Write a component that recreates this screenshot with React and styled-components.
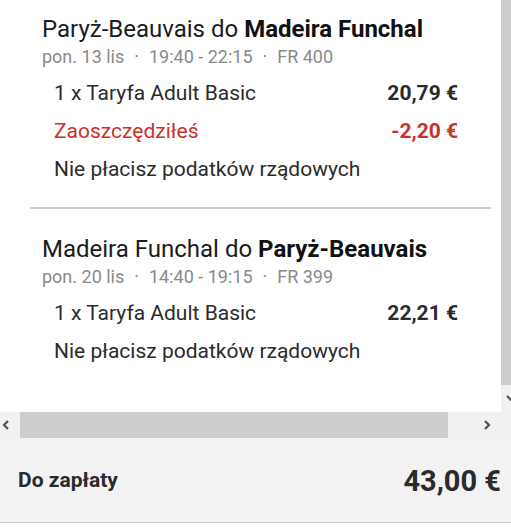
import React from 'react';
import styled, { createGlobalStyle } from 'styled-components';

const GlobalStyle = createGlobalStyle`
  html, body {
    margin: 0;
    padding: 0;
    background: #fff;
  }
  body {
    font-family: Roboto, "Liberation Sans", sans-serif;
  }
`;

const Screen = styled.div`
  width: 511px;
  height: 531px;
  overflow: hidden;
  background: #fff;
`;

const Viewport = styled.div`
  display: flex;
  height: 412px;
`;

const Panel = styled.div`
  width: 501px;
  background: #fff;
  overflow: hidden;
`;

const VScroll = styled.div`
  width: 10px;
  display: flex;
  flex-direction: column;
  background: #f1f1f1;
  overflow: hidden;
`;

const VThumb = styled.div`
  height: 385px;
  background: #cdcdcd;
`;

const VArrow = styled.div`
  padding: 9px 0 0 5px;
  color: #505050;
  line-height: 0;
`;

const HScroll = styled.div`
  height: 26px;
  display: flex;
  align-items: stretch;
  background: #f1f1f1;
`;

const HArrow = styled.div`
  width: ${p => p.$w}px;
  display: flex;
  align-items: center;
  justify-content: ${p => (p.$right ? 'flex-end' : 'flex-start')};
  padding: ${p => (p.$right ? '0 18px 0 0' : '0 0 0 2px')};
  box-sizing: border-box;
  color: #505050;
`;

const HThumb = styled.div`
  width: 428px;
  background: #cdcdcd;
`;

const Section = styled.section`
  padding: ${p => p.$top}px 43px 19px 42px;
`;

const Title = styled.h2`
  margin: 0;
  font-size: 24px;
  line-height: 28px;
  font-weight: 400;
  color: #1c1c1c;
  white-space: nowrap;

  b {
    font-weight: 700;
    color: #111;
  }
`;

const Meta = styled.div`
  margin-top: 4px;
  font-size: 18px;
  line-height: 20px;
  color: #8a8a8a;
  white-space: nowrap;
`;

const Dot = styled.span`
  margin: 0 10px;
`;

const Rows = styled.div`
  margin-top: 7px;
  padding-left: 12px;
`;

const Row = styled.div`
  display: flex;
  justify-content: space-between;
  font-size: 21px;
  line-height: 38px;
  color: ${p => (p.$red ? '#c8322b' : '#2b2b2b')};
  white-space: nowrap;
`;

const Price = styled.span`
  font-weight: 700;
  font-size: 21px;
`;

const Divider = styled.hr`
  margin: 0 10px 0 30px;
  border: none;
  height: 2px;
  background: #cfcfcf;
`;

const Footer = styled.footer`
  height: 84px;
  display: flex;
  align-items: center;
  justify-content: space-between;
  padding: 0 10px 0 18px;
  background: #f2f2f2;
  border-bottom: 1px solid #c8c8c8;
`;

const TotalLabel = styled.span`
  font-size: 21px;
  font-weight: 700;
  color: #2a2a2a;
`;

const TotalValue = styled.span`
  font-size: 29px;
  font-weight: 700;
  color: #2a2a2a;
  margin-top: 2px;
`;

const Chevron = ({ dir }) => {
  const d = {
    left: 'M6 1 L2 5 L6 9',
    right: 'M2 1 L6 5 L2 9',
    down: 'M1 2 L5 6 L9 2',
  }[dir];
  return (
    <svg width="10" height="10" viewBox="0 0 10 10">
      <path d={d} fill="none" stroke="currentColor" strokeWidth="2.2" />
    </svg>
  );
};

const flights = [
  {
    top: 15,
    from: 'Paryż-Beauvais',
    to: 'Madeira Funchal',
    meta: ['pon. 13 lis', '19:40 - 22:15', 'FR 400'],
    rows: [
      { label: '1 x Taryfa Adult Basic', price: '20,79 €' },
      { label: 'Zaoszczędziłeś', price: '-2,20 €', red: true },
      { label: 'Nie płacisz podatków rządowych' },
    ],
  },
  {
    top: 26,
    from: 'Madeira Funchal',
    to: 'Paryż-Beauvais',
    meta: ['pon. 20 lis', '14:40 - 19:15', 'FR 399'],
    rows: [
      { label: '1 x Taryfa Adult Basic', price: '22,21 €' },
      { label: 'Nie płacisz podatków rządowych' },
    ],
  },
];

const FlightSection = ({ flight }) => (
  <Section $top={flight.top}>
    <Title>
      {flight.from} do <b>{flight.to}</b>
    </Title>
    <Meta>
      {flight.meta.map((m, i) => (
        <React.Fragment key={m}>
          {i > 0 && <Dot>·</Dot>}
          {m}
        </React.Fragment>
      ))}
    </Meta>
    <Rows>
      {flight.rows.map(r => (
        <Row key={r.label} $red={r.red}>
          <span>{r.label}</span>
          {r.price && <Price>{r.price}</Price>}
        </Row>
      ))}
    </Rows>
  </Section>
);

export default function App() {
  return (
    <>
      <GlobalStyle />
      <Screen>
        <Viewport>
          <Panel>
            <FlightSection flight={flights[0]} />
            <Divider />
            <FlightSection flight={flights[1]} />
          </Panel>
          <VScroll>
            <VThumb />
            <VArrow>
              <Chevron dir="down" />
            </VArrow>
          </VScroll>
        </Viewport>
        <HScroll>
          <HArrow $w={20}>
            <Chevron dir="left" />
          </HArrow>
          <HThumb />
          <HArrow $w={63} $right>
            <Chevron dir="right" />
          </HArrow>
        </HScroll>
        <Footer>
          <TotalLabel>Do zapłaty</TotalLabel>
          <TotalValue>43,00 €</TotalValue>
        </Footer>
      </Screen>
    </>
  );
}
